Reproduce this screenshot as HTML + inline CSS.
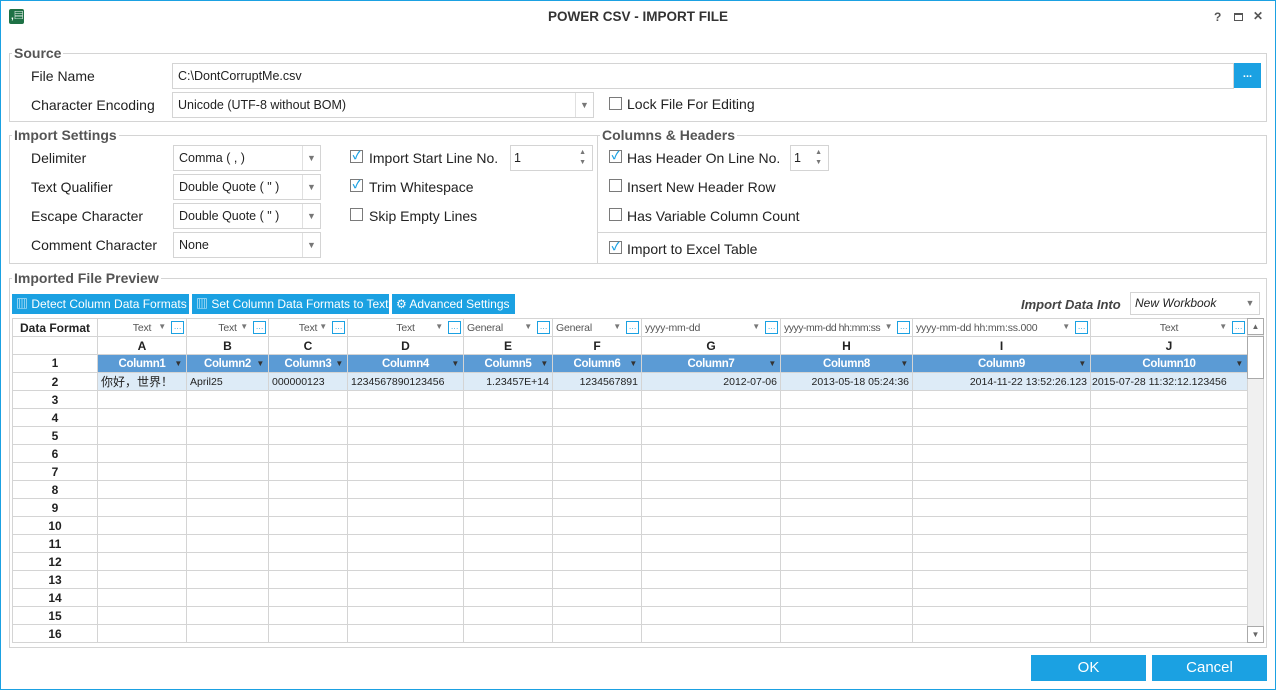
<!DOCTYPE html>
<html><head><meta charset="utf-8"><style>
*{box-sizing:border-box;margin:0;padding:0}
body{width:1276px;height:690px;background:#fff;font-family:"Liberation Sans","Noto Sans CJK SC",sans-serif;color:#222;position:relative;overflow:hidden;font-size:14px}
.a{position:absolute}
.win{left:0;top:0;width:1276px;height:690px;border:1px solid #1ba1e2}
.title{left:0;top:9px;width:1276px;text-align:center;font-weight:bold;font-size:13.5px;color:#333}
.grp{border:1px solid #d4d4d4}
.gl{font-weight:bold;color:#555;font-size:14px;background:#fff;padding:0 2px}
.lbl{font-size:14px;color:#222}
.box{border:1px solid #d4d4d4;background:#fff;font-size:12.5px;padding-left:5px;line-height:24px}
.arr{position:absolute;right:0;top:0;width:18px;height:100%;border-left:1px solid #e0e0e0;color:#777;font-size:9px;text-align:center}
.cb{width:13px;height:13px;border:1px solid #7a7a7a;background:#fff;font-size:11px;line-height:11px;text-align:center;color:#1ba1e2;font-weight:bold}
.btn{background:#1ba1e2;color:#fff;font-size:12px;line-height:20px;padding-left:4px;white-space:nowrap}
table{border-collapse:collapse;table-layout:fixed;position:absolute;left:12px;top:318px;font-size:11px}
td{border:1px solid #d4d4d4;height:18px;padding:0 3px;white-space:nowrap;overflow:hidden}
td.n{font-weight:bold;text-align:center;font-size:12px}
tr.h td{background:#5b9bd5;color:#fff;font-weight:bold;text-align:center;font-size:11.5px;letter-spacing:-0.3px;position:relative}
tr.d td{background:#ddebf7;font-size:10.5px}
.f{position:relative;text-align:center;color:#555;font-size:10.5px;letter-spacing:-0.2px}
.f i{position:absolute;font-style:normal;font-size:8px;color:#777;top:3px}
.f b{position:absolute;right:2px;top:2px;width:13px;height:13px;border:1px solid #1ba1e2;font-size:8px;line-height:9px;color:#1ba1e2;font-weight:normal;text-align:center}
.dd{position:absolute;right:4px;top:4px;font-size:8px;color:#333}
</style></head><body>
<div class="a win"></div>
<div class="a" style="left:9px;top:9px;width:15px;height:15px;background:#1e7145;border-radius:2px;color:#fff;font-size:10px;line-height:15px;padding-left:2px;font-weight:bold">,▤</div>
<div class="a title">POWER CSV - IMPORT FILE</div>
<div class="a" style="left:1214px;top:10px;font-size:12px;color:#555;font-weight:bold">?</div>
<div class="a" style="left:1234px;top:13px;width:9px;height:8px;border:1px solid #555;border-top-width:2px"></div>
<div class="a" style="left:1253px;top:9px;font-size:12px;color:#555;font-weight:bold">✕</div>

<div class="a grp" style="left:9px;top:53px;width:1258px;height:69px"></div>
<div class="a gl" style="left:12px;top:45px">Source</div>
<div class="a lbl" style="left:31px;top:68px">File Name</div>
<div class="a lbl" style="left:31px;top:97px">Character Encoding</div>
<div class="a box" style="left:172px;top:63px;width:1062px;height:26px">C:\DontCorruptMe.csv</div>
<div class="a" style="left:1234px;top:63px;width:27px;height:25px;background:#1ba1e2;color:#fff;text-align:center;font-size:11px;line-height:22px;font-weight:bold">...</div>
<div class="a box" style="left:172px;top:92px;width:422px;height:26px">Unicode (UTF-8 without BOM)<div class="arr">▼</div></div>
<div class="a cb" style="left:609px;top:97px"></div>
<div class="a lbl" style="left:627px;top:96px">Lock File For Editing</div>

<div class="a grp" style="left:9px;top:135px;width:589px;height:129px"></div>
<div class="a gl" style="left:12px;top:127px">Import Settings</div>
<div class="a grp" style="left:597px;top:135px;width:670px;height:129px"></div>
<div class="a" style="left:597px;top:232px;width:670px;height:1px;background:#d4d4d4"></div>
<div class="a gl" style="left:600px;top:127px">Columns &amp; Headers</div>

<div class="a lbl" style="left:31px;top:150px">Delimiter</div>
<div class="a lbl" style="left:31px;top:179px">Text Qualifier</div>
<div class="a lbl" style="left:31px;top:208px">Escape Character</div>
<div class="a lbl" style="left:31px;top:237px">Comment Character</div>
<div class="a box" style="left:173px;top:145px;width:148px;height:26px">Comma ( , )<div class="arr">▼</div></div>
<div class="a box" style="left:173px;top:174px;width:148px;height:26px">Double Quote ( " )<div class="arr">▼</div></div>
<div class="a box" style="left:173px;top:203px;width:148px;height:26px">Double Quote ( " )<div class="arr">▼</div></div>
<div class="a box" style="left:173px;top:232px;width:148px;height:26px">None<div class="arr">▼</div></div>

<div class="a cb" style="left:350px;top:150px">✓</div><div class="a lbl" style="left:369px;top:150px">Import Start Line No.</div>
<div class="a box" style="left:510px;top:145px;width:83px;height:26px;padding-left:3px">1<div class="a" style="right:6px;top:2px;font-size:7px;line-height:10px;color:#777">▲<br>▼</div></div>
<div class="a cb" style="left:350px;top:179px">✓</div><div class="a lbl" style="left:369px;top:179px">Trim Whitespace</div>
<div class="a cb" style="left:350px;top:208px"></div><div class="a lbl" style="left:369px;top:208px">Skip Empty Lines</div>

<div class="a cb" style="left:609px;top:150px">✓</div><div class="a lbl" style="left:627px;top:150px">Has Header On Line No.</div>
<div class="a box" style="left:790px;top:145px;width:39px;height:26px;padding-left:3px">1<div class="a" style="right:6px;top:2px;font-size:7px;line-height:10px;color:#777">▲<br>▼</div></div>
<div class="a cb" style="left:609px;top:179px"></div><div class="a lbl" style="left:627px;top:179px">Insert New Header Row</div>
<div class="a cb" style="left:609px;top:208px"></div><div class="a lbl" style="left:627px;top:208px">Has Variable Column Count</div>
<div class="a cb" style="left:609px;top:241px">✓</div><div class="a lbl" style="left:627px;top:241px">Import to Excel Table</div>

<div class="a grp" style="left:9px;top:278px;width:1258px;height:370px"></div>
<div class="a gl" style="left:12px;top:270px">Imported File Preview</div>
<div class="a btn" style="left:12px;top:294px;width:177px;height:20px">▥ Detect Column Data Formats</div>
<div class="a btn" style="left:192px;top:294px;width:197px;height:20px">▥ Set Column Data Formats to Text</div>
<div class="a btn" style="left:392px;top:294px;width:123px;height:20px">⚙ Advanced Settings</div>
<div class="a" style="left:1021px;top:297px;font-size:13px;font-weight:bold;font-style:italic;color:#444">Import Data Into</div>
<div class="a box" style="left:1130px;top:292px;width:130px;height:23px;font-size:12px;font-style:italic;line-height:21px;padding-left:4px">New Workbook<div class="arr" style="border:none">▼</div></div>

<table>
<colgroup><col style="width:85px"><col style="width:89px"><col style="width:82px"><col style="width:79px"><col style="width:116px"><col style="width:89px"><col style="width:89px"><col style="width:139px"><col style="width:132px"><col style="width:178px"><col style="width:157px"></colgroup>
<tr><td class="n">Data Format</td>
<td class="f">Text<i style="right:20px">▼</i><b>…</b></td>
<td class="f">Text<i style="right:20px">▼</i><b>…</b></td>
<td class="f">Text<i style="right:20px">▼</i><b>…</b></td>
<td class="f">Text<i style="right:20px">▼</i><b>…</b></td>
<td class="f" style="text-align:left">General<i style="right:20px">▼</i><b>…</b></td>
<td class="f" style="text-align:left">General<i style="right:20px">▼</i><b>…</b></td>
<td class="f" style="text-align:left">yyyy-mm-dd<i style="right:20px">▼</i><b>…</b></td>
<td class="f" style="text-align:left;letter-spacing:-0.5px">yyyy-mm-dd hh:mm:ss<i style="right:20px">▼</i><b>…</b></td>
<td class="f" style="text-align:left">yyyy-mm-dd hh:mm:ss.000<i style="right:20px">▼</i><b>…</b></td>
<td class="f">Text<i style="right:20px">▼</i><b>…</b></td></tr>
<tr><td></td><td class="n">A</td><td class="n">B</td><td class="n">C</td><td class="n">D</td><td class="n">E</td><td class="n">F</td><td class="n">G</td><td class="n">H</td><td class="n">I</td><td class="n">J</td></tr>
<tr class="h"><td class="n" style="background:#fff;color:#222;letter-spacing:0">1</td><td>Column1<span class="dd">▼</span></td><td>Column2<span class="dd">▼</span></td><td>Column3<span class="dd">▼</span></td><td>Column4<span class="dd">▼</span></td><td>Column5<span class="dd">▼</span></td><td>Column6<span class="dd">▼</span></td><td>Column7<span class="dd">▼</span></td><td>Column8<span class="dd">▼</span></td><td>Column9<span class="dd">▼</span></td><td>Column10<span class="dd">▼</span></td></tr>
<tr class="d"><td class="n" style="background:#fff;font-size:12px">2</td><td style="font-size:12px">你好，世界！</td><td>April25</td><td>000000123</td><td>1234567890123456</td><td style="text-align:right">1.23457E+14</td><td style="text-align:right">1234567891</td><td style="text-align:right">2012-07-06</td><td style="text-align:right">2013-05-18 05:24:36</td><td style="text-align:right">2014-11-22 13:52:26.123</td><td style="padding:0 1px">2015-07-28 11:32:12.123456</td></tr>
<tr><td class="n">3</td><td></td><td></td><td></td><td></td><td></td><td></td><td></td><td></td><td></td><td></td></tr>
<tr><td class="n">4</td><td></td><td></td><td></td><td></td><td></td><td></td><td></td><td></td><td></td><td></td></tr>
<tr><td class="n">5</td><td></td><td></td><td></td><td></td><td></td><td></td><td></td><td></td><td></td><td></td></tr>
<tr><td class="n">6</td><td></td><td></td><td></td><td></td><td></td><td></td><td></td><td></td><td></td><td></td></tr>
<tr><td class="n">7</td><td></td><td></td><td></td><td></td><td></td><td></td><td></td><td></td><td></td><td></td></tr>
<tr><td class="n">8</td><td></td><td></td><td></td><td></td><td></td><td></td><td></td><td></td><td></td><td></td></tr>
<tr><td class="n">9</td><td></td><td></td><td></td><td></td><td></td><td></td><td></td><td></td><td></td><td></td></tr>
<tr><td class="n">10</td><td></td><td></td><td></td><td></td><td></td><td></td><td></td><td></td><td></td><td></td></tr>
<tr><td class="n">11</td><td></td><td></td><td></td><td></td><td></td><td></td><td></td><td></td><td></td><td></td></tr>
<tr><td class="n">12</td><td></td><td></td><td></td><td></td><td></td><td></td><td></td><td></td><td></td><td></td></tr>
<tr><td class="n">13</td><td></td><td></td><td></td><td></td><td></td><td></td><td></td><td></td><td></td><td></td></tr>
<tr><td class="n">14</td><td></td><td></td><td></td><td></td><td></td><td></td><td></td><td></td><td></td><td></td></tr>
<tr><td class="n">15</td><td></td><td></td><td></td><td></td><td></td><td></td><td></td><td></td><td></td><td></td></tr>
<tr><td class="n">16</td><td></td><td></td><td></td><td></td><td></td><td></td><td></td><td></td><td></td><td></td></tr>
</table>
<div class="a" style="left:1247px;top:318px;width:17px;height:325px;background:#f0f0f0;border:1px solid #d4d4d4"></div>
<div class="a" style="left:1247px;top:318px;width:17px;height:17px;border:1px solid #aaa;background:#fff;font-size:8px;text-align:center;line-height:15px;color:#666">▲</div>
<div class="a" style="left:1247px;top:336px;width:17px;height:43px;border:1px solid #aaa;background:#fff"></div>
<div class="a" style="left:1247px;top:626px;width:17px;height:17px;border:1px solid #aaa;background:#fff;font-size:8px;text-align:center;line-height:15px;color:#666">▼</div>

<div class="a" style="left:1031px;top:655px;width:115px;height:26px;background:#1ba1e2;color:#fff;text-align:center;line-height:26px;font-size:15px">OK</div>
<div class="a" style="left:1152px;top:655px;width:115px;height:26px;background:#1ba1e2;color:#fff;text-align:center;line-height:26px;font-size:15px">Cancel</div>
</body></html>
